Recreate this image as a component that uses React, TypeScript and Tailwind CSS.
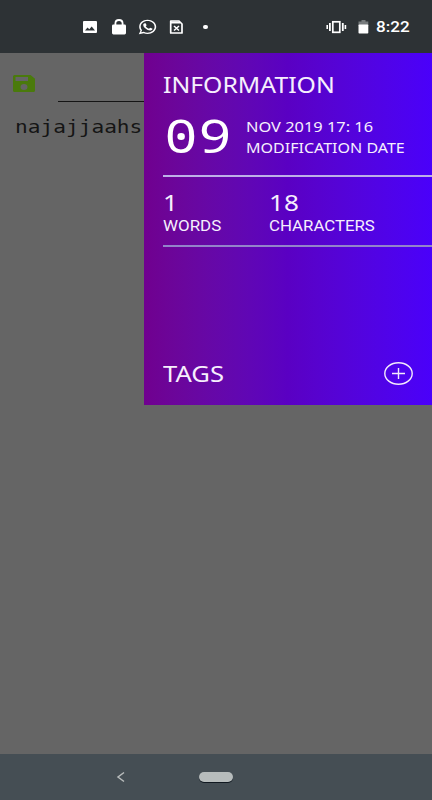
const noto = "font-['Noto_Sans','Open_Sans',sans-serif]"
const roboto = "font-['Roboto',sans-serif]"
const mono = "font-['DejaVu_Sans_Mono',monospace]"

function StatusBar() {
  return (
    <div className="flex h-[53px] shrink-0 items-center bg-[#2d3235] text-white">
      {/* Notifications */}
      <svg className="ml-[82px] h-[14px] w-4" viewBox="0 0 16 14" fill="none">
        <rect x="1" y="1" width="14" height="12" rx="1" fill="#fff" />
        <path d="M3 10.5 L5.5 7.5 L7.3 9.3 L9.7 6.5 L13 10.5 Z" fill="#2d3235" />
      </svg>
      <svg className="ml-3.5 h-4 w-3.5" viewBox="0 0 14 16" fill="none">
        <rect x="0" y="5.5" width="14" height="10" rx="1.4" fill="#fff" />
        <path d="M3.4 6.5 V4.5 C3.4 -.2 10.6 -.2 10.6 4.5 V6.5" stroke="#fff" strokeWidth="1.8" />
      </svg>
      <svg className="ml-3 h-4 w-[19px]" viewBox="0 0 24 24" preserveAspectRatio="none" fill="#fff">
        <path fillRule="evenodd" d="M12 1C5.8 1 1.5 5.7 1.5 11.6c0 2.2.6 4 1.7 5.7L1 23l6.2-1.7c1.5.8 3.1 1.2 4.8 1.2 6 0 11-4.9 11-10.9S18 1 12 1Zm0 2c5 0 9 3.9 9 8.7 0 4.9-4 8.8-9 8.8-1.8 0-3.2-.5-4.7-1.4L4 20l1.1-3.3A8.4 8.4 0 0 1 3.4 11.7C3.4 6.9 7 3 12 3Z" />
        <path d="M8.5 6.3C7.6 6.4 6.5 7.5 6.6 9c.2 3.7 4.8 8 8.7 8.3 1.6.1 3-1 3-2.6 0-.5-2.3-1.7-2.8-1.7-.7 0-1.1 1.6-1.7 1.5-1.5-.4-3.4-2.2-4-3.6.3-.7 1.1-1 1-1.6-.2-.8-1-3-1.4-3Z" />
      </svg>
      <svg className="ml-3 h-4 w-[15px]" viewBox="0 0 15 16" fill="none">
        <path d="M1.7 2 H10 L13 5 V14 H1.7 Z" stroke="#fff" strokeWidth="1.7" strokeLinejoin="round" />
        <path d="M2 3.5 H11" stroke="#fff" strokeWidth="2" />
        <path d="M5 7 L10 11.5 M10 7 L5 11.5" stroke="#fff" strokeWidth="1.5" />
      </svg>
      <span className="ml-[19px] h-1 w-[5px] rounded-full bg-white" />

      {/* System */}
      <svg className="ml-[118px] h-3.5 w-[21px]" viewBox="0 0 21 14" fill="none" stroke="#fff">
        <rect x="6.8" y="1.8" width="7" height="10.5" strokeWidth="1.7" />
        <path d="M3.9 3 V11 M16.8 3 V11" strokeWidth="1.8" />
        <path d="M1.2 5 V9 M19.4 5 V9" strokeWidth="1.6" />
      </svg>
      <svg className="ml-[11px] h-3.5 w-[11px]" viewBox="0 0 11 14">
        <path d="M3.5 0 H7.5 V1.5 H10.3 V5 H.5 V1.5 H3.5 Z" fill="#777b7d" />
        <rect x=".5" y="4.5" width="9.8" height="9" rx=".8" fill="#fff" />
      </svg>
      <span className={`${roboto} ml-[7px] inline-block origin-left scale-x-[1.22] text-sm font-medium leading-none`}>8:22</span>
    </div>
  )
}

function NoteEditor() {
  return (
    <div className="w-36 shrink-0 overflow-hidden pt-[22px]">
      <div className="flex">
        <svg className="ml-[13px] h-[17px] w-[22px]" viewBox="0 0 22 17">
          <path
            fillRule="evenodd"
            d="M1.5 0 H17.5 L22 3.700 V15.500 Q22 17 20.500 17 H1.500 Q0 17 0 15.500 V1.500 Q0 0 1.500 0 Z M2.500 2 V6 H15 V2 Z M11 9 A3.500 3 0 1 0 11 15 A3.500 3 0 1 0 11 9 Z"
            fill="#4a7a0c"
          />
        </svg>
        <div className="ml-[23px] h-[27px] flex-1 border-b border-[#151515]" />
      </div>
      <p className={`${mono} ml-[15px] mt-[13px] origin-left scale-x-[1.175] whitespace-nowrap text-[18px] leading-6 text-[#151515]`}>najajjaahs</p>
    </div>
  )
}

function InformationPanel() {
  return (
    <div className="flex h-[352px] flex-1 flex-col bg-linear-to-r from-[#70008f] via-[#5a00c3] to-[#4a00fa] pl-[19px] text-[#f6effd]">
      <h1 className={`${noto} mt-5 origin-left scale-x-[1.18] whitespace-nowrap text-[21px] leading-6`}>INFORMATION</h1>

      <div className="mt-2 flex h-[70px]">
        <div className="w-[83px]">
          {/* Day of month with a dotted zero */}
          <span className={`${noto} relative ml-0.5 inline-block origin-left scale-x-[1.24] text-[45px] leading-[62px] tracking-[1.7px] text-white`}>
            09
            <i className="absolute left-[10px] top-[28px] h-[7px] w-[6px] rounded-full bg-white" />
          </span>
        </div>
        <div className={`${noto} pt-[11px] text-sm leading-[21px]`}>
          <p className="origin-left scale-x-[1.17] whitespace-nowrap">NOV 2019 17: 16</p>
          <p className="origin-left scale-x-[1.145] whitespace-nowrap">MODIFICATION DATE</p>
        </div>
      </div>

      <div className="flex h-[72px] border-y-2 border-t-[#bdb0e8] border-b-[#9384ca] pt-[14px]">
        <div className="w-[106px]">
          <p className={`${noto} origin-left scale-x-[1.24] text-[21px] leading-6`}>1</p>
          <p className={`${roboto} w-fit origin-left scale-x-[1.21] text-sm leading-[22px]`}>WORDS</p>
        </div>
        <div>
          <p className={`${noto} origin-left scale-x-[1.24] text-[21px] leading-6`}>18</p>
          <p className={`${roboto} w-fit origin-left scale-x-[1.2] text-sm leading-[22px]`}>CHARACTERS</p>
        </div>
      </div>

      <div className="mb-[19px] mt-auto flex items-center justify-between pr-[19px]">
        <h2 className={`${noto} origin-left scale-x-[1.22] text-[21px] leading-6`}>TAGS</h2>
        <svg className="h-6 w-[30px]" viewBox="0 0 30 24" fill="none" stroke="#f3eafc" strokeWidth="1.4">
          <ellipse cx="15.5" cy="11.5" rx="13.7" ry="10.8" />
          <path d="M9 11.5 H22 M15.5 6 V17" />
        </svg>
      </div>
    </div>
  )
}

export default function App() {
  return (
    <div className="flex h-[800px] w-[432px] flex-col overflow-hidden bg-[#656565]">
      <StatusBar />
      <main className="flex flex-1 items-start">
        <NoteEditor />
        <InformationPanel />
      </main>

      {/* Navigation bar */}
      <nav className="flex h-[46px] items-center bg-[#454e54]">
        <svg className="ml-[116px] h-3 w-2.5" viewBox="0 0 10 12" fill="none" stroke="#b8bcbc" strokeWidth="1.5">
          <path d="M8 1.5 L2 6 L8 10.5" />
        </svg>
        <span className="ml-[73px] h-2.5 w-[34px] rounded-full bg-[#b7bcbc] shadow-[0_1px_0_#101820]" />
      </nav>
    </div>
  )
}
